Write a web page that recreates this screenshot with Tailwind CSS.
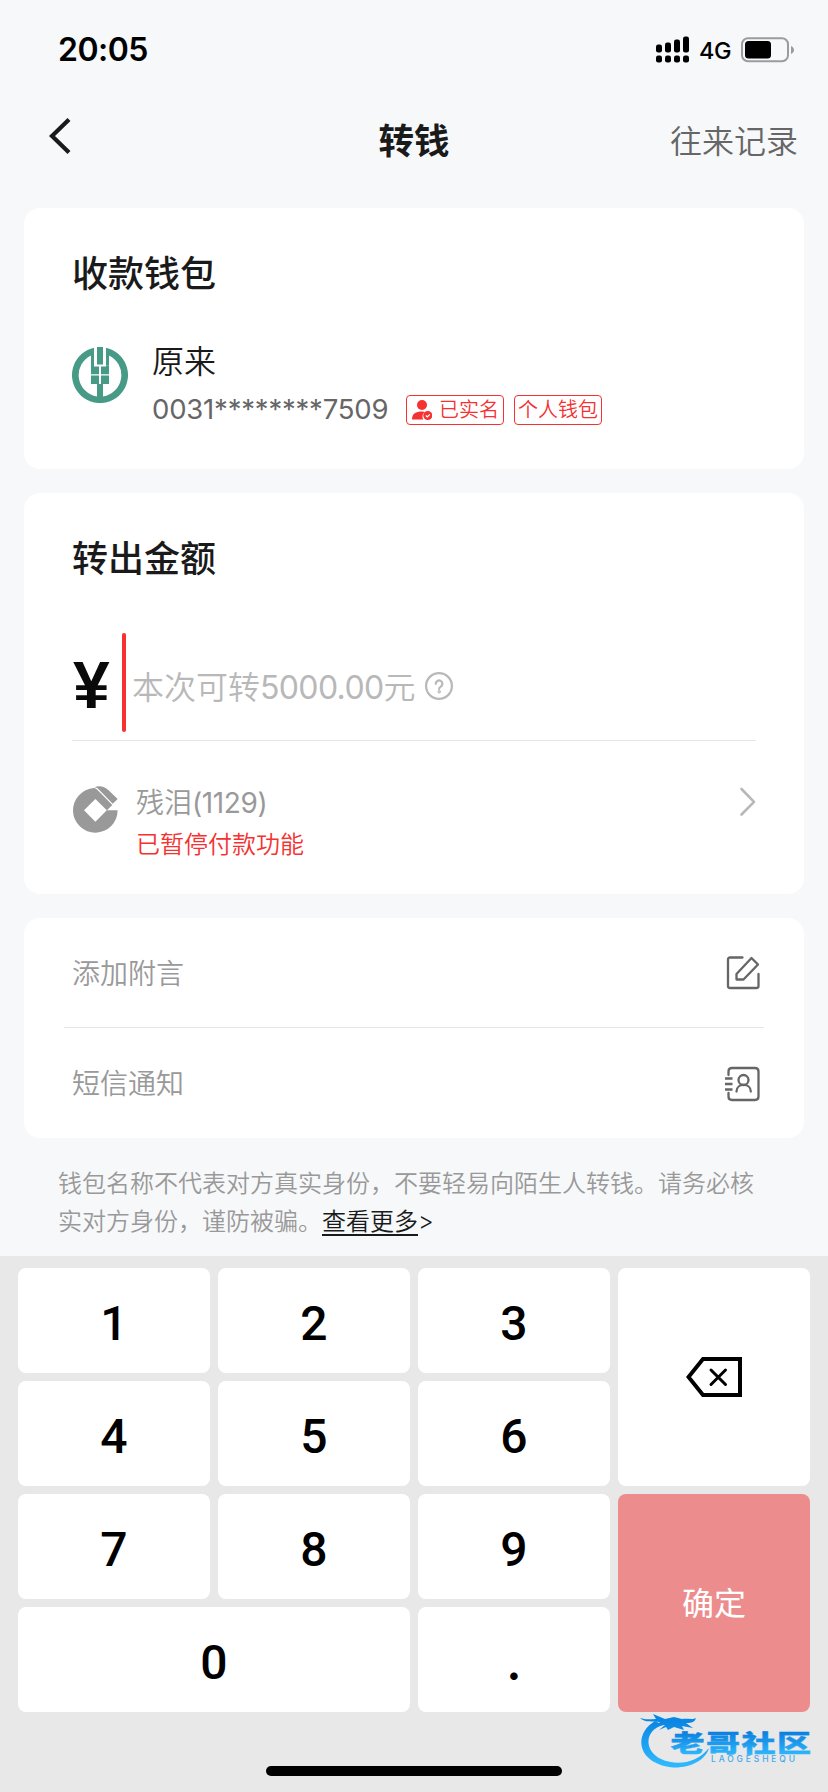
<!DOCTYPE html>
<html lang="zh-CN">
<head>
<meta charset="utf-8">
<title>转钱</title>
<script src="https://cdn.jsdelivr.net/npm/@tailwindcss/browser@4"></script>
</head>
<body class="bg-[#f7f8fa]">
<div class="relative flex flex-col w-[828px] h-[1792px] overflow-hidden bg-[#f7f8fa] font-['Inter','Noto_Sans_CJK_SC',sans-serif] font-[350] text-[#1a1a1a]">

  <!-- Status bar -->
  <header class="flex h-[88px] shrink-0 items-center justify-between pl-[58px] pr-[33px] pt-[12px] text-black">
    <span class="text-[32px] leading-[40px] font-semibold tracking-[-0.5px]">20:05</span>
    <div class="flex items-center">
      <svg class="w-[34px] h-[28px]" viewBox="0 0 34 28">
        <rect x="0" y="8.500" width="6" height="8" rx="2.200"/><rect x="9" y="6.500" width="6" height="10" rx="2.200"/><rect x="18" y="3.500" width="6" height="13" rx="2.200"/><rect x="27" y="0.500" width="6" height="16" rx="2.200"/>
        <rect x="0" y="19.500" width="6" height="7" rx="2.200"/><rect x="9" y="19.500" width="6" height="7" rx="2.200"/><rect x="18" y="19.500" width="6" height="7" rx="2.200"/><rect x="27" y="19.500" width="6" height="7" rx="2.200"/>
      </svg>
      <span class="ml-[9px] mt-[1px] w-[34px] text-[23.500px] leading-[28px] font-medium tracking-[-0.5px]">4G</span>
      <svg class="ml-[8px] w-[54px] h-[26px]" viewBox="0 0 54 26">
        <rect x="1" y="1.200" width="46" height="23" rx="6" fill="none" stroke="#9b9c9d" stroke-width="2"/>
        <rect x="4" y="4" width="26" height="17.500" rx="3.500"/>
        <path d="M50 9c4 1.500 4 6.500 0 8z" fill="#9b9c9d"/>
      </svg>
    </div>
  </header>

  <!-- Navigation -->
  <nav class="grid h-[120px] shrink-0 grid-cols-3 items-start px-[30px]">
    <svg class="ml-[18px] mt-[29px] w-[24px] h-[38px]" viewBox="0 0 24 38" fill="none" stroke="#1a1a1a" stroke-width="4.200"><path d="M21 2.500L4 19L21 35.500"/></svg>
    <h1 class="mt-[30px] text-center text-[35.500px] leading-[48px] font-bold">转钱</h1>
    <span class="mt-[30px] text-right text-[32px] leading-[48px] text-[#666]">往来记录</span>
  </nav>

  <!-- Receiving wallet -->
  <section class="mx-[24px] h-[261px] shrink-0 rounded-2xl bg-white px-[48px] pt-[41px]">
    <h2 class="text-[36px] leading-[50px] font-medium">收款钱包</h2>
    <div class="mt-[39px] flex items-start">
      <svg class="mt-[9px] w-[56px] h-[56px] shrink-0" viewBox="0 0 56 56" fill="#469a86">
        <path d="M22 .7A28 28 0 1 0 34 .7V18.500H37V8.500A21.700 21.700 0 0 1 31 49.500V37H37V28.500H29V37H27V28.500H19V37H25V49.500A21.700 21.700 0 0 1 19 8.500V27.200H27V19.500H22Z"/>
        <path d="M25 0H31V17.500H25ZM29 19.500H34V18.500H37V27.200H29Z"/>
      </svg>
      <div class="ml-[24px]">
        <p class="text-[32px] leading-[48px]">原来</p>
        <div class="mt-[1px] flex h-[46px] items-center text-[27.500px] text-[#666]">
          <span class="w-[254px] font-[380] tracking-[-0.2px]">0031********7509</span>
          <span class="flex h-[30px] w-[98px] items-center rounded-[4px] border border-[#f53131] pl-[5px] text-[20px] text-[#f53131]">
            <svg class="mr-[7px] w-[20px] h-[20px]" viewBox="0 0 20 20" fill="#f53131"><circle cx="10" cy="5" r="5"/><path d="M0 19.500C0 13.500 4 11.500 10 11.500L13 12A5 5 0 0 0 11.500 19.500Z"/><circle cx="15.800" cy="15.500" r="4.500"/><path d="M13.800 15.500l1.500 1.500l2.500-2.700" fill="none" stroke="#fff" stroke-width="1.200"/></svg>已实名
          </span>
          <span class="ml-[10px] flex h-[30px] w-[88px] items-center justify-center rounded-[4px] border border-[#f53131] text-[20px] text-[#f53131]">个人钱包</span>
        </div>
      </div>
    </div>
  </section>

  <!-- Amount -->
  <section class="mx-[24px] mt-[24px] h-[401px] shrink-0 rounded-2xl bg-white px-[48px] pt-[41px]">
    <h2 class="text-[36px] leading-[50px] font-medium">转出金额</h2>
    <div class="mt-[49px] flex h-[108px] items-start border-b border-[#e6e6e6]">
      <span class="w-[50px] pl-[1px] pt-[16px] font-['Liberation_Sans'] text-[66px] leading-[72px] font-bold text-[#0a0a0a]">¥</span>
      <span class="h-[99px] w-[4px] rounded-full bg-[#f53131]"></span>
      <span class="ml-[6px] mt-[31px] text-[32px] leading-[48px] text-[#b8b8b8]">本次可转<span class="font-[390] tracking-[-0.65px]">5000.00</span>元</span>
      <svg class="ml-[10px] mt-[39px] w-[28px] h-[28px]" viewBox="0 0 28 28" fill="none" stroke="#b8b8b8" stroke-width="2.200"><circle cx="14" cy="14" r="12.900"/><path d="M10.800 11.800a3.300 3.300 0 1 1 5 2.800c-1.300.8-1.700 1.300-1.700 2.400" stroke-linecap="round"/><circle cx="14.200" cy="19.700" r=".6"/></svg>
    </div>
    <div class="flex items-start pt-[38px]">
      <svg class="mt-[6px] w-[48px] h-[50px]" viewBox="0 0 48 50" fill="#999">
        <path d="M40.300 20L25.500 5C24.500 4 23.500 3.300 22 3.100A22.300 22.300 0 1 0 45.600 25.300H35Z"/>
        <path fill="#fff" d="M23.400 14L34.800 25.300L23.400 36.700L12 25.300Z"/>
        <path d="M22.300 2.300C27 0 32.500 1.200 36.300 5L45.700 14L40.700 18.700L27.300 5C26 3.500 24.500 2.500 22.300 2.300Z"/>
      </svg>
      <div class="ml-[16px] flex-1">
        <p class="mt-[2px] text-[28px] leading-[44px] text-[#999]">残泪<span class="font-[380] tracking-[-0.4px]">(1129)</span></p>
        <p class="text-[24px] leading-[40px] text-[#f53131]">已暂停付款功能</p>
      </div>
      <svg class="mt-[8px] w-[17px] h-[30px]" viewBox="0 0 17 30" fill="none" stroke="#b8b8b8" stroke-width="2.600" stroke-linecap="round" stroke-linejoin="round"><path d="M2.500 2L15 14.800L2.500 27.500"/></svg>
    </div>
  </section>

  <!-- Message and notification -->
  <section class="mx-[24px] mt-[24px] h-[220px] shrink-0 rounded-2xl bg-white px-[40px]">
    <div class="flex h-[110px] items-center justify-between border-b border-[#e6e6e6] pl-[8px] pr-[2px] text-[28px] text-[#999]">
      <span class="pt-[2px]">添加附言</span>
      <svg class="w-[36px] h-[36px]" viewBox="0 0 36 36" fill="none" stroke="#666" stroke-width="2.300" stroke-linecap="round" stroke-linejoin="round"><path d="M16.500 2.500H4Q2 2.500 2 4.500V31Q2 33 4 33H30.500Q32.500 33 32.500 31V19M10.500 19L25.500 3L32 9.500L17.500 24.500H10.500Z"/></svg>
    </div>
    <div class="flex h-[110px] items-center justify-between pl-[8px] pr-[2px] text-[28px] text-[#999]">
      <span class="pt-[2px]">短信通知</span>
      <svg class="mt-[1px] w-[40px] h-[36px]" viewBox="0 0 40 36" fill="none" stroke="#666" stroke-width="2.300" stroke-linecap="round"><path d="M6.500 9V5.500Q6.500 2 10 2H33Q36.500 2 36.500 5.500V30.500Q36.500 34 33 34H10Q6.500 34 6.500 30.500V27"/><path d="M3 12.500H10.500M3 18H10.500M3 23.500H10.500" stroke-linecap="butt"/><circle cx="21.500" cy="14" r="5"/><path d="M14.500 25.500C14.500 16.700 28.800 16.700 28.800 25.500"/></svg>
    </div>
  </section>

  <p class="mt-[27px] h-[91px] shrink-0 whitespace-nowrap pl-[58px] text-[24px] leading-[38px] text-[#999]">钱包名称不代表对方真实身份，不要轻易向陌生人转钱。请务必核<br>实对方身份，谨防被骗。<span class="text-[#1a1a1a]"><span class="border-b-2 border-[#1a1a1a] inline-block leading-[25px]">查看更多</span>&gt;</span></p>

  <!-- Numeric keypad -->
  <div class="flex h-[536px] shrink-0 flex-col items-center bg-[#e8e8e8] pt-[12px]">
    <div class="grid h-[444px] w-[792px] grid-cols-4 grid-rows-4 gap-[8px] font-['Roboto','Noto_Sans_CJK_SC',sans-serif] text-[48px] font-medium text-black *:flex *:items-center *:justify-center *:rounded-lg *:bg-white *:pt-[6px]">
      <button>1</button><button>2</button><button>3</button>
      <button class="row-span-2 pt-0!"><svg class="w-[57px] h-[40px]" viewBox="0 0 57 40" fill="none" stroke="#000"><path d="M17 2H54V38H17L2.500 20Z" stroke-width="4"/><path d="M25 13L39.500 27.500M39.500 13L25 27.500" stroke-width="3" stroke-linecap="round"/></svg></button>
      <button>4</button><button>5</button><button>6</button>
      <button>7</button><button>8</button><button>9</button>
      <button class="row-span-2 bg-[#ed8c8c]! pt-[2px]! text-[32px] font-normal text-white">确定</button>
      <button class="col-span-2">0</button><button class="font-['Inter'] font-semibold">.</button>
    </div>
    <div class="mt-[54px] h-[10px] w-[296px] rounded-full bg-black"></div>
  </div>

  <!-- Community watermark, floats above the page -->
  <svg class="absolute left-[636px] top-[1710px] w-[180px] h-[60px]" viewBox="0 0 180 60">
    <defs>
      <linearGradient id="b" x1="0" y1="0" x2="0" y2="60" gradientUnits="userSpaceOnUse"><stop offset=".2" stop-color="#0b86e4"/><stop offset=".9" stop-color="#2cb8ff"/></linearGradient>
      <linearGradient id="t" x1="0" y1="-20" x2="0" y2="2" gradientUnits="userSpaceOnUse"><stop offset="0" stop-color="#0a7ede"/><stop offset="1" stop-color="#2cb4fb"/></linearGradient>
    </defs>
    <path fill="url(#b)" d="M19 11C-4 25 2 54 37 57.500C56 58 70 49 73 38C60 54 40 56 25 49C7 40 9 20 27 15Z"/>
    <path fill="url(#b)" d="M4 8C10 10 14 9 20 9L17 4L29 9L38 7L46 9C52 8 56 10 60 8C59 12 56 13 50 13L57 18L46 16L48 20L38 17L32 20L30 17L23 20L29 15L19 16L24 12C16 11 9 13 4 8Z"/>
    <text transform="translate(34.500 41.500) scale(1.420 1)" font-family="Noto Sans CJK SC" font-weight="900" font-size="24" textLength="99" fill="url(#t)" stroke="url(#t)" stroke-width=".4">老哥社区</text>
    <text x="75" y="52" font-family="Inter" font-weight="500" font-size="8.500" textLength="84" fill="#45a9ea">LAOGESHEQU</text>
  </svg>
</div>
</body>
</html>
